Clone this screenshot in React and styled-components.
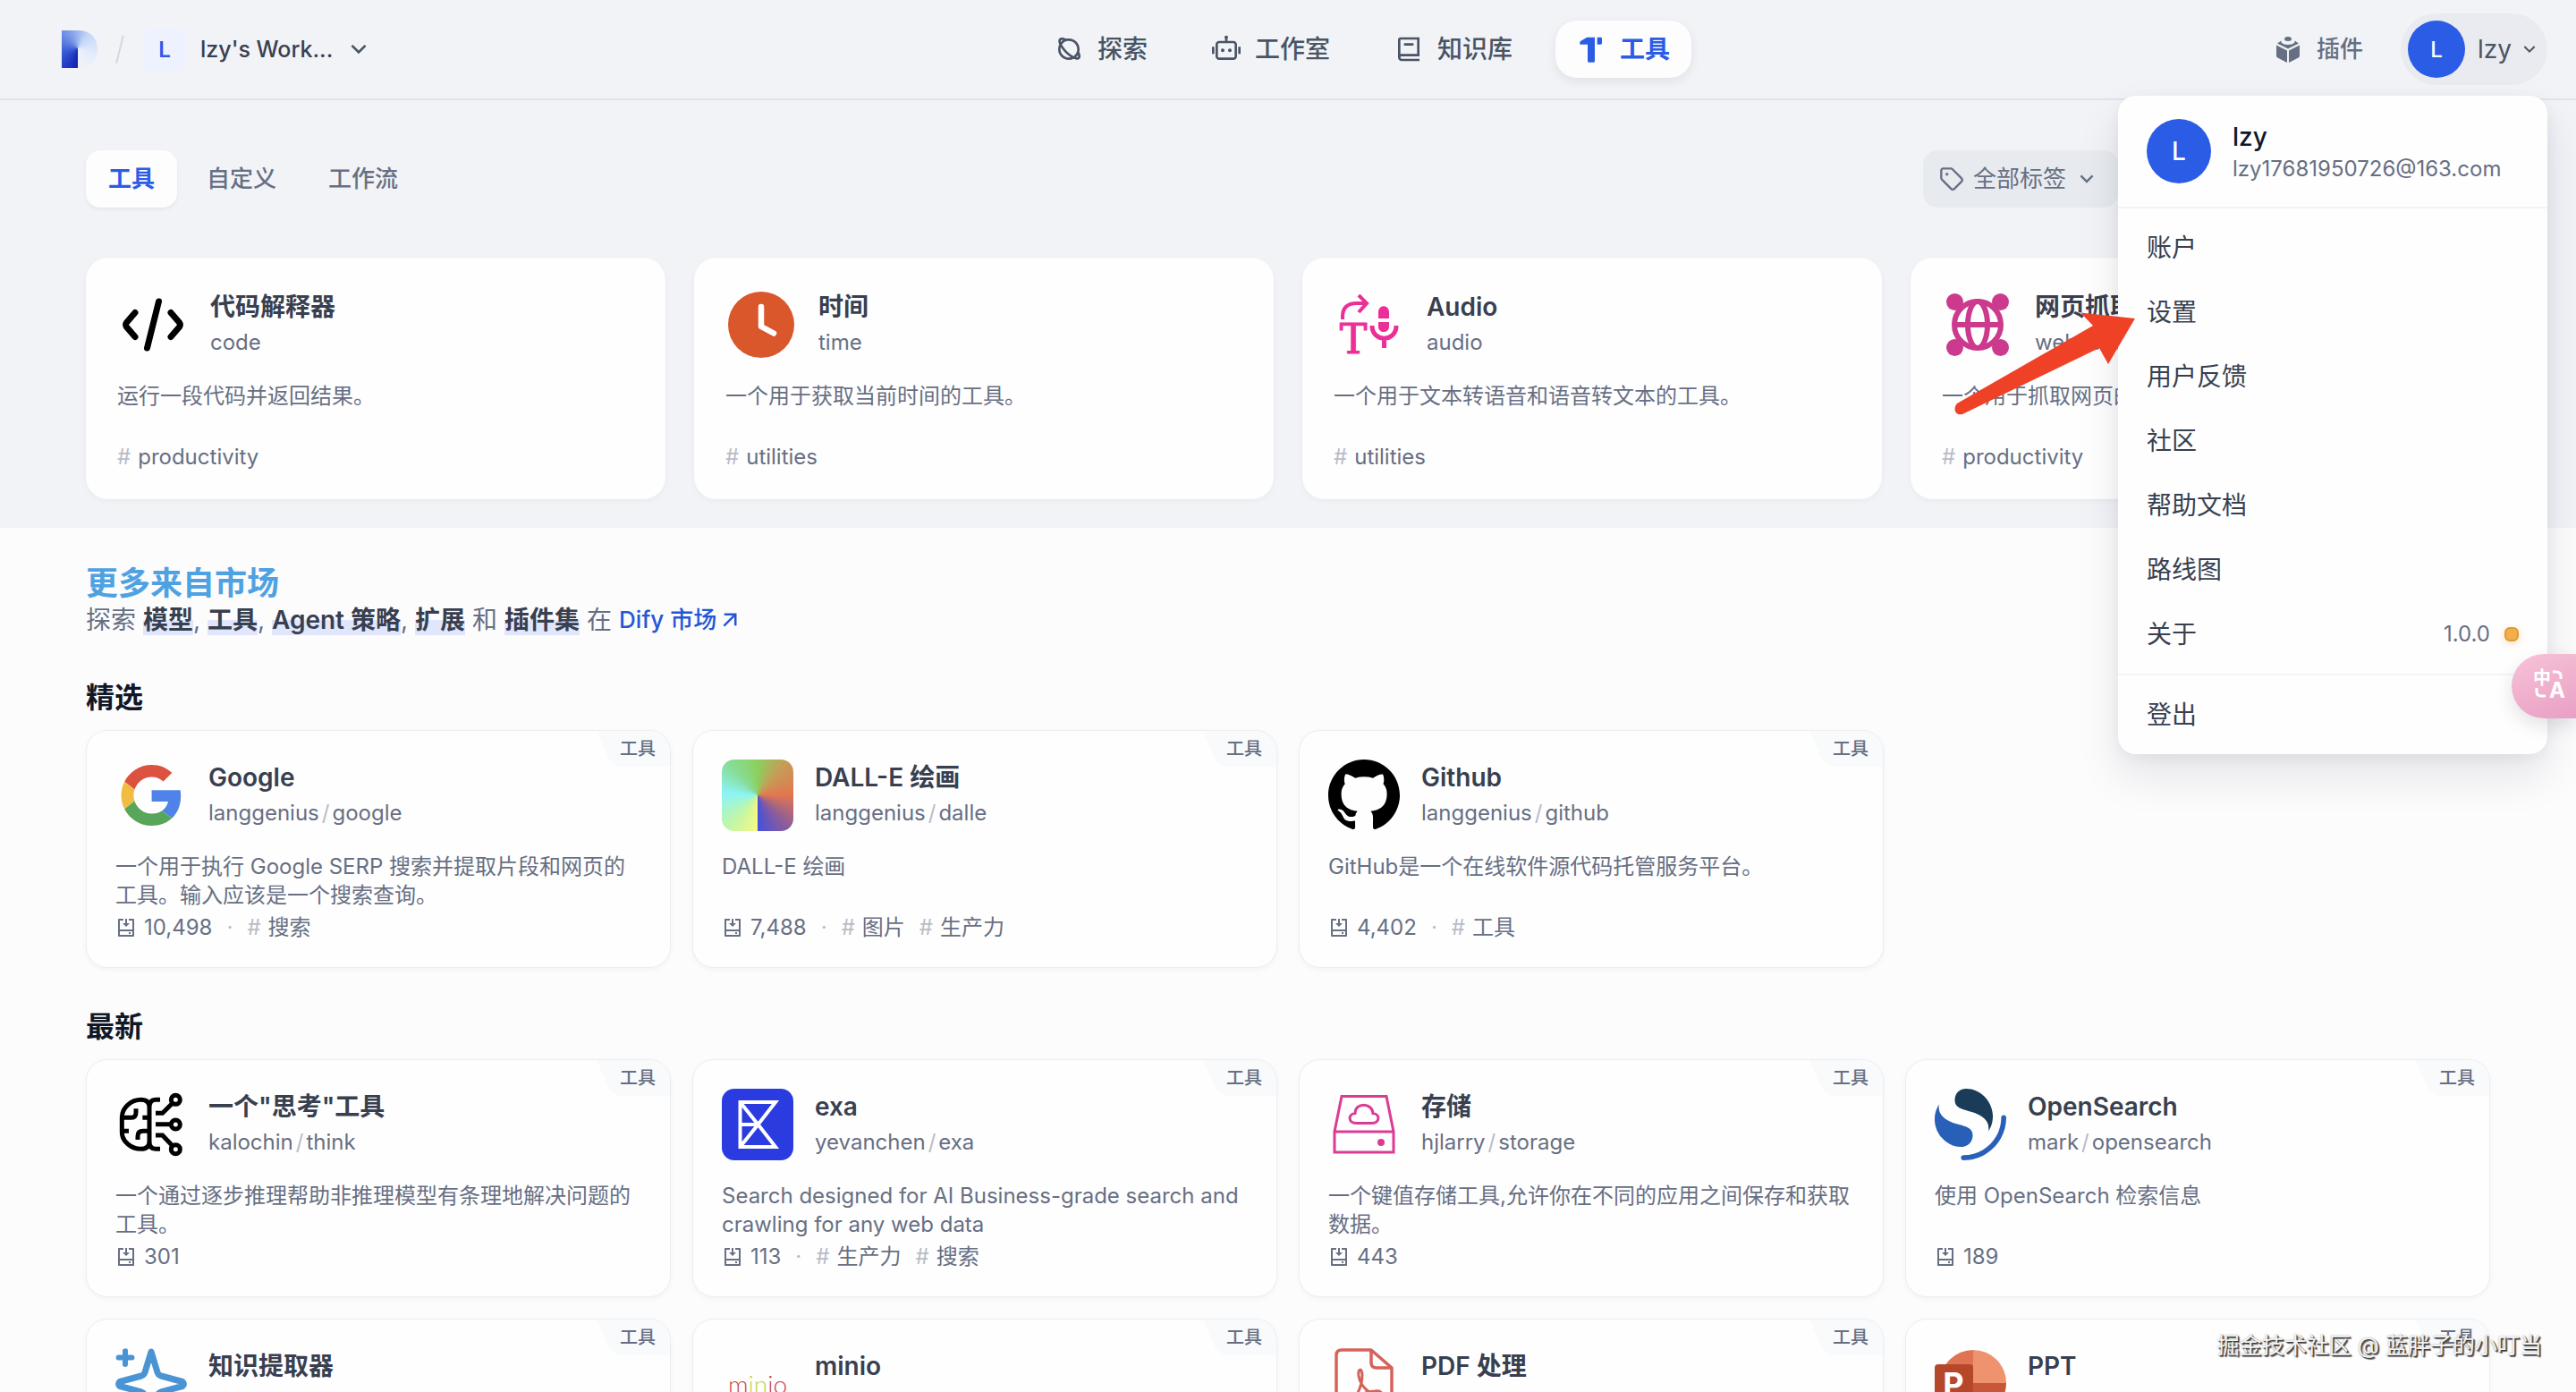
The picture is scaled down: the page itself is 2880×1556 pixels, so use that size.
import React from "react";
import styled, { createGlobalStyle, css } from "styled-components";
import { Tag as TagIcon } from "lucide-react";
import {
  RiPlanetLine,
  RiRobot2Line,
  RiBook2Line,
  RiHammerFill,
  RiArrowDownSLine,
  RiInstallLine,
  RiArrowRightUpLine,
  RiGithubFill,
} from "react-icons/ri";

const GlobalStyle = createGlobalStyle`
  *, *::before, *::after { box-sizing: border-box; }
  body {
    margin: 0;
    background: #fcfcfd;
    color: #354052;
    font-family: Inter, "Noto Sans CJK SC", sans-serif;
    -webkit-font-smoothing: antialiased;
  }
  button, select, input { font: inherit; color: inherit; }
  h1, h2, h3, p, ul { margin: 0; padding: 0; }
  ul { list-style: none; }
  a { color: inherit; text-decoration: none; }
`;

const color = {
  body: "#f1f3f7",
  primary: "#101828",
  secondary: "#384050",
  tertiary: "#676f83",
  faint: "#b8bcc6",
  accent: "#2b5ce6",
};

const Page = styled.div`
  position: relative;
  height: 100vh;
  overflow: hidden;
  display: flex;
  flex-direction: column;
`;

/* ---------- header ---------- */

const Header = styled.header`
  flex: none;
  display: flex;
  align-items: center;
  justify-content: space-between;
  height: 112px;
  padding: 0 32px 0 64px;
  background: #f1f3f7;
  border-bottom: 2px solid #e0e3e8;
`;

const HeaderStart = styled.div`
  display: flex;
  align-items: center;
  min-width: 464px;
`;

const HeaderEnd = styled.div`
  display: flex;
  align-items: center;
  gap: 18px;
`;

const Logo = styled.a`
  width: 40px;
  height: 42px;
  margin: 0 24px 0 5px;
  border-radius: 0 20px 20px 0;
  background: conic-gradient(
    from 180deg at 18px 20px,
    #1022b4,
    #3a5fd8 22%,
    #7f9be8 42%,
    #c3d6f8 60%,
    #e3ecfb 80%,
    #f1f3f8
  );
`;

const Slash = styled.span`
  width: 2px;
  height: 32px;
  background: #d5d8df;
  transform: rotate(14deg);
`;

const Workspace = styled.label`
  display: flex;
  align-items: center;
  gap: 16px;
  margin-left: 25px;
`;

const WorkspaceBadge = styled.span`
  display: grid;
  place-items: center;
  width: 48px;
  height: 48px;
  border-radius: 12px;
  background: #eef2ff;
  color: ${color.accent};
  font-size: 24px;
  font-weight: 600;
`;

const SelectWrap = styled.span`
  display: flex;
  align-items: center;
  gap: ${(p) => p.$gap}px;
`;

const BareSelect = styled.select`
  appearance: none;
  border: 0;
  padding: 0;
  background: transparent;
  color: ${(p) => p.$color};
  font-size: ${(p) => p.$size || 26}px;
  font-weight: ${(p) => p.$weight || 400};
  line-height: 40px;
`;

const Nav = styled.nav`
  display: flex;
  gap: 24px;
`;

const NavItem = styled.a`
  display: flex;
  align-items: center;
  gap: 16px;
  height: 64px;
  padding: 0 24px;
  border-radius: 24px;
  color: #495464;
  font-size: 28px;
  font-weight: 500;
  line-height: 40px;
  ${(p) =>
    p.$active &&
    css`
      background: #fdfdfe;
      color: ${color.accent};
      font-weight: 700;
      box-shadow: 0 4px 12px rgba(16, 24, 40, 0.08);
    `}
`;

const PluginLink = styled.a`
  display: flex;
  align-items: center;
  gap: 16px;
  height: 64px;
  padding: 0 24px;
  color: ${color.tertiary};
  font-size: 26px;
  font-weight: 500;
  line-height: 40px;
`;

const Account = styled.div`
  position: relative;
`;

const AccountButton = styled.button`
  display: flex;
  align-items: center;
  gap: 8px;
  height: 80px;
  padding: 8px;
  border: 0;
  border-radius: 40px;
  background: #e9ebf0;
  color: #495464;
  font-size: 28px;
`;

const Avatar = styled.span`
  flex: none;
  display: grid;
  place-items: center;
  width: ${(p) => p.$size}px;
  height: ${(p) => p.$size}px;
  border-radius: 50%;
  background: ${color.accent};
  color: #fff;
  font-size: ${(p) => (p.$size > 64 ? 28 : 24)}px;
  font-weight: 500;
`;

const AccountName = styled.span`
  margin-left: 6px;
`;

/* ---------- account menu ---------- */

const Menu = styled.div`
  position: absolute;
  z-index: 2;
  top: 92px;
  right: 0;
  width: 480px;
  border-radius: 20px;
  background: #fefefe;
  box-shadow: 0 24px 48px rgba(16, 24, 40, 0.1), 0 4px 16px rgba(16, 24, 40, 0.05);
`;

const MenuProfile = styled.div`
  display: flex;
  align-items: center;
  gap: 24px;
  padding: 26px 32px;
`;

const ProfileName = styled.p`
  color: ${color.primary};
  font-size: 28px;
  font-weight: 500;
  line-height: 40px;
`;

const ProfileMail = styled.p`
  color: ${color.tertiary};
  font-size: 24px;
  line-height: 32px;
`;

const MenuGroup = styled.ul`
  padding: 8px 0;
  border-top: 2px solid #f2f3f5;
`;

const MenuItem = styled.a`
  display: flex;
  align-items: center;
  height: 72px;
  padding: 0 32px;
  color: ${color.secondary};
  font-size: 28px;
  line-height: 40px;
`;

const Version = styled.span`
  display: flex;
  align-items: center;
  gap: 16px;
  margin-left: auto;
  color: ${color.tertiary};
  font-size: 24px;

  &::after {
    content: "";
    width: 16px;
    height: 16px;
    border: 2px solid #e09a35;
    border-radius: 6px;
    background: #f3ad4a;
    box-shadow: 0 2px 8px rgba(243, 173, 74, 0.4);
  }
`;

/* ---------- installed tools ---------- */

const Installed = styled.section`
  padding: 56px 96px 32px;
  background: ${color.body};
`;

const Toolbar = styled.div`
  display: flex;
  align-items: center;
  justify-content: space-between;
  margin-bottom: 56px;
`;

const Group = styled.div`
  display: flex;
  gap: ${(p) => p.$gap}px;
`;

const Tab = styled.button`
  height: 64px;
  padding: 0 25px;
  border: 0;
  border-radius: 16px;
  background: transparent;
  color: ${color.tertiary};
  font-size: 26px;
  font-weight: 500;
  line-height: 40px;
  ${(p) =>
    p.$active &&
    css`
      background: #fdfdfe;
      color: ${color.accent};
      font-weight: 700;
      box-shadow: 0 2px 4px rgba(16, 24, 40, 0.06);
    `}
`;

const TagFilter = styled.label`
  display: flex;
  align-items: center;
  gap: 10px;
  width: 218px;
  height: 64px;
  padding: 0 18px;
  border-radius: 16px;
  background: #e7ebef;
  color: ${color.tertiary};
`;

const Search = styled.input`
  width: 400px;
  height: 64px;
  padding: 0 16px;
  border: 0;
  border-radius: 16px;
  background: #e7ebef;
  font-size: 26px;
`;

const CardGrid = styled.div`
  display: grid;
  grid-template-columns: repeat(4, minmax(0, 1fr));
  gap: ${(p) => p.$gap}px;
`;

const Card = styled.article`
  position: relative;
  overflow: hidden;
  border: 1px solid ${(p) => (p.$roomy ? "#fbfcfd" : "#eceef2")};
  border-radius: 24px;
  padding: ${(p) => (p.$roomy ? "34px 34px 26px" : "32px 32px 24px")};
  background: #fefefe;
  box-shadow: 0 2px 6px rgba(16, 24, 40, 0.04);
`;

const CardHead = styled.div`
  display: flex;
  align-items: center;
  gap: 24px;
  margin-bottom: 24px;
`;

const IconBox = styled.span`
  flex: none;
  display: grid;
  place-items: center;
  width: 80px;
  height: 80px;
  border-radius: 14px;
  overflow: hidden;
  background: ${(p) => p.$bg || "transparent"};
`;

const CardTitle = styled.h3`
  color: ${color.secondary};
  font-size: 28px;
  font-weight: 600;
  line-height: 40px;
`;

const CardSub = styled.p`
  display: flex;
  gap: 3px;
  color: ${color.tertiary};
  font-size: 24px;
  line-height: 40px;
`;

const Faint = styled.span`
  color: ${color.faint};
`;

const CardText = styled.p`
  min-height: 64px;
  color: ${color.tertiary};
  font-size: 24px;
  line-height: 32px;
`;

const CardMeta = styled.div`
  display: flex;
  align-items: center;
  gap: 16px;
  height: 40px;
  color: ${color.tertiary};
  font-size: 24px;
  line-height: 40px;
`;

const MetaPart = styled.span`
  display: flex;
  align-items: center;
  gap: 8px;
`;

const Corner = styled.span`
  position: absolute;
  top: 0;
  right: 0;
  height: 40px;
  padding: 0 16px 0 26px;
  background: #f8fafb;
  clip-path: polygon(0 0, 100% 0, 100% 100%, 24px 100%, 14px 80%);
  color: ${color.tertiary};
  font-size: 20px;
  font-weight: 500;
  line-height: 40px;
`;

/* ---------- marketplace ---------- */

const Market = styled.main`
  padding: 38px 96px 0;
`;

const MarketTitle = styled.h1`
  color: #4fa2e2;
  font-size: 36px;
  font-weight: 600;
  line-height: 48px;
`;

const MarketLead = styled.p`
  display: flex;
  align-items: center;
  gap: 8px;
  color: ${color.tertiary};
  font-size: 28px;
  line-height: 34px;
`;

const Mark = styled.strong`
  color: ${color.secondary};
  font-weight: 600;
  background: linear-gradient(to bottom, transparent 50%, #e0e6fb 50%);
`;

const MarketLink = styled.a`
  display: flex;
  align-items: center;
  color: #2457d6;
  font-size: 26px;
  font-weight: 500;
`;

const SectionTitle = styled.h2`
  margin: ${(p) => (p.$first ? 46 : 42)}px 0 12px;
  color: ${color.primary};
  font-size: 32px;
  font-weight: 700;
  line-height: 48px;
`;

/* ---------- overlays ---------- */

const Translate = styled.button`
  position: absolute;
  z-index: 3;
  top: 731px;
  right: 0;
  width: 72px;
  height: 72px;
  padding: 0 0 0 12px;
  border: 0;
  border-radius: 36px 0 0 36px;
  background: linear-gradient(160deg, #f6c3d8, #ea9fc4);
  box-shadow: 0 8px 20px rgba(16, 24, 40, 0.12);
`;

const Pointer = styled.svg`
  position: absolute;
  z-index: 3;
  top: 346px;
  right: 488px;
  pointer-events: none;
`;

const Credit = styled.p`
  position: absolute;
  z-index: 3;
  right: 38px;
  bottom: 36px;
  color: #f4f4f4;
  font-size: 25px;
  line-height: 32px;
  text-shadow: 1px 1px 1px #333, 2px 2px 1px #666, 0 0 2px #aaa;
`;

/* ---------- tool icons, drawn on an 80 unit box ---------- */

const Art = ({ children, box = "0 0 80 80", ...rest }) => (
  <svg width="80" height="80" viewBox={box} fill="none" aria-hidden="true" {...rest}>
    {children}
  </svg>
);

const CodeArt = () => (
  <Art stroke="#000" strokeWidth="7" strokeLinecap="round" strokeLinejoin="round">
    <path d="M20 26.500L10.500 37.500Q8.800 40 10.500 42.500L20 53.500M60 26.500L69.500 37.500Q71.200 40 69.500 42.500L60 53.500M46.500 14L33.500 66" />
  </Art>
);

const ClockArt = () => (
  <Art>
    <circle cx="40" cy="40" r="37" fill="#d9572a" />
    <path d="M40 20V42L54 49.500" stroke="#fff" strokeWidth="6.500" strokeLinecap="round" strokeLinejoin="round" />
  </Art>
);

const AudioArt = () => (
  <Art stroke="#ec2f98" strokeWidth="4">
    <path d="M10 34V31C10 20 16 16 26 16H36M28 7L37 16L28 26" />
    <text
      x="22"
      y="72"
      textAnchor="middle"
      fontFamily="DejaVu Serif, serif"
      fontSize="46"
      fill="#ec2f98"
      stroke="#ec2f98"
      strokeWidth="1"
    >
      T
    </text>
    <path d="M50 33V26C50 17 62 17 62 26V33ZM50 37H62V42C62 50 50 50 50 42Z" fill="#ec2f98" stroke="none" />
    <path d="M43 41C43 60 70 60 70 41M56.500 54V66" strokeWidth="5" />
  </Art>
);

const GlobeArt = () => (
  <Art stroke="#cc3a8e" strokeWidth="6">
    <path d="M16 16L24 24M64 16L56 24M16 64L24 56M64 64L56 56" />
    <g fill="#cc3a8e" stroke="none">
      <circle cx="14.500" cy="14.500" r="9.500" />
      <circle cx="65.500" cy="14.500" r="9.500" />
      <circle cx="14.500" cy="65.500" r="9.500" />
      <circle cx="65.500" cy="65.500" r="9.500" />
    </g>
    <circle cx="40" cy="40" r="26" fill="#fff" />
    <ellipse cx="40" cy="40" rx="11" ry="26" />
    <path d="M14 40H66" />
  </Art>
);

const GoogleArt = () => (
  <Art box="-4.600 -4.200 56.400 56.400">
    <path fill="#dc5140" d="M24 9.500c3.540 0 6.710 1.220 9.210 3.600l6.850-6.850C35.900 2.380 30.470 0 24 0 14.620 0 6.510 5.380 2.560 13.220l7.980 6.190C12.430 13.720 17.740 9.500 24 9.500z" />
    <path fill="#4f83ea" d="M46.980 24.550c0-1.570-.15-3.090-.38-4.550H24v9.020h12.940c-.58 2.960-2.260 5.480-4.780 7.180l7.730 6c4.510-4.180 7.090-10.360 7.090-17.650z" />
    <path fill="#f0bd42" d="M10.530 28.590c-.48-1.450-.76-2.990-.76-4.590s.27-3.140.76-4.590l-7.980-6.190C.92 16.460 0 20.120 0 24c0 3.880.92 7.540 2.560 10.780l7.970-6.190z" />
    <path fill="#57a65b" d="M24 48c6.480 0 11.930-2.130 15.890-5.810l-7.730-6c-2.150 1.450-4.920 2.300-8.160 2.300-6.260 0-11.570-4.220-13.470-9.910l-7.980 6.190C6.510 42.620 14.620 48 24 48z" />
  </Art>
);

const GithubArt = () => <RiGithubFill size={80} viewBox="2 2 20 20" color="#000" />;

const BrainArt = () => (
  <Art box="27 36 240 240" stroke="#000" strokeWidth="15">
    <path d="M141 98C141 79 128 73 112 73C82 73 49 98 49 132V182C49 214 82 238 112 238C128 238 141 232 141 213ZM141 98C141 79 150 73 162 73H177M141 213C141 232 150 238 162 238H177" />
    <path d="M49 133H78C91 133 96 127 96 116V103M118 133H141M49 178H72M141 178H120C107 178 102 184 102 195V207" />
    <path d="M162 118H185L219 84M162 155H212M162 192H185L219 228" />
    <circle cx="229" cy="73" r="15" />
    <circle cx="229" cy="156" r="15" />
    <circle cx="229" cy="239" r="15" />
  </Art>
);

const ExaArt = () => (
  <Art stroke="#fff" strokeWidth="4">
    <path d="M20.500 15H60L40.500 40L60 65H20.500ZM20.500 15L40.500 40L20.500 65M20.500 40H40.500" />
  </Art>
);

const StorageArt = () => (
  <Art stroke="#dc3b94" strokeWidth="3">
    <path d="M15 8.500H65L73 48V71H7V48ZM7 48H73" />
    <path d="M31 38.500C22 38.500 22 28 30 27.500C30 15 49 15 50 27.500C58 28 58 38.500 49 38.500Z" />
    <circle cx="59" cy="60" r="4" fill="#dc3b94" stroke="none" />
  </Art>
);

const OpenSearchArt = () => (
  <Art box="0 0 64 64">
    <path fill="#2860b8" d="M61.737 23.500C60.488 23.500 59.475 24.513 59.475 25.763C59.475 44.381 44.381 59.475 25.763 59.475C24.513 59.475 23.500 60.488 23.500 61.737C23.500 62.987 24.513 64 25.763 64C46.881 64 64 46.881 64 25.763C64 24.513 62.987 23.500 61.737 23.500Z" />
    <path fill="#1a3c58" d="M48.081 38C50.257 34.451 52.362 29.718 51.948 23.092C51.090 9.367 38.659 -1.045 26.921 0.084C22.325 0.525 17.607 4.271 18.026 10.981C18.208 13.896 19.635 15.617 21.954 16.940C24.162 18.199 26.998 18.997 30.213 19.901C34.096 20.993 38.601 22.220 42.063 24.772C46.213 27.830 49.049 31.374 48.081 38Z" />
    <path fill="#2860b8" d="M3.919 14C1.743 17.550 -0.362 22.282 0.052 28.908C0.910 42.633 13.341 53.045 25.079 51.916C29.675 51.475 34.393 47.729 33.974 41.020C33.792 38.104 32.365 36.383 30.046 35.060C27.838 33.801 25.002 33.003 21.787 32.099C17.904 31.007 13.399 29.780 9.937 27.228C5.787 24.171 2.951 20.626 3.919 14Z" />
  </Art>
);

const SparkArt = () => (
  <Art stroke="#4a94d4" strokeWidth="7" strokeLinecap="round" strokeLinejoin="round">
    <path d="M40 4L33 27Q32 30 29 31L5 37.500Q2 40 5 42.500L29 49Q32 50 33 53L40 76L47 53Q48 50 51 49L75 42.500Q78 40 75 37.500L51 31Q48 30 47 27Z" />
    <path d="M11 3V18M3.500 10.500H18.500" strokeWidth="6" />
  </Art>
);

const PdfArt = () => (
  <Art stroke="#d4635a" strokeWidth="3.500" strokeLinejoin="round">
    <path d="M48 2H15Q9 2 9 8V72Q9 78 15 78H65Q71 78 71 72V22ZM48 2V16Q48 22 54 22H71" />
    <path d="M22 64C30 58 38 44 38 30C38 22 33 22 34 31C36 42 45 52 57 52C62 52 60 47 52 48C40 49 24 56 20 62C19 66 21 66 22 64Z" strokeWidth="3" />
  </Art>
);

const PptArt = () => (
  <Art>
    <path d="M43 39V2A37 37 0 0 0 6 39Z" fill="#e07452" />
    <path d="M43 2A37 37 0 0 1 80 39H43Z" fill="#ee926f" />
    <path d="M6 39H80A37 37 0 0 1 6 39Z" fill="#c85638" />
    <rect x="0" y="18" width="43" height="43" rx="4" fill="#b7472a" />
    <text x="21" y="53" textAnchor="middle" fontFamily="Inter, sans-serif" fontSize="36" fontWeight="700" fill="#fff">
      P
    </text>
  </Art>
);

const Wordmark = styled.span`
  color: #c9474a;
  font-family: Lato, sans-serif;
  font-size: 28px;
  font-weight: 300;
  line-height: 32px;
`;

const Lime = styled.span`
  color: #c3d24c;
`;

const MinioArt = () => (
  <Wordmark>
    m<Lime>in</Lime>io
  </Wordmark>
);

const PluginIcon = () => (
  <svg width="32" height="32" viewBox="0 0 32 32" fill="currentColor" aria-hidden="true">
    <path d="M3 11.500L15 17.500V31L4.300 25.500Q3 24.700 3 23.500ZM29 11.500L17 17.500V31L27.700 25.500Q29 24.700 29 23.500Z" />
    <path d="M4 9.500L8.500 6.500V7.500C8.500 12 23.500 12 23.500 7.500V6.500L28 9.500L16 15.500Z" />
    <ellipse cx="16" cy="4.500" rx="4" ry="2.500" />
  </svg>
);

const TranslateIcon = () => (
  <svg width="36" height="36" viewBox="0 0 36 36" fill="none" stroke="#fff" strokeWidth="3" aria-hidden="true">
    <text x="10" y="18" textAnchor="middle" fontFamily="Noto Sans CJK SC, sans-serif" fontSize="20" fontWeight="700" fill="#fff" stroke="none">
      中
    </text>
    <text x="27" y="33" textAnchor="middle" fontFamily="Inter, sans-serif" fontSize="24" fontWeight="700" fill="#fff" stroke="none">
      A
    </text>
    <path d="M22 4H26Q31 4 31 9V12M4 22V26Q4 31 9 31H14" />
  </svg>
);

/* ---------- data ---------- */

const installed = [
  { title: "代码解释器", name: "code", text: "运行一段代码并返回结果。", tag: "productivity", Icon: CodeArt },
  { title: "时间", name: "time", text: "一个用于获取当前时间的工具。", tag: "utilities", Icon: ClockArt },
  { title: "Audio", name: "audio", text: "一个用于文本转语音和语音转文本的工具。", tag: "utilities", Icon: AudioArt },
  { title: "网页抓取", name: "webscraper", text: "一个用于抓取网页的工具。", tag: "productivity", Icon: GlobeArt },
];

const dalleFill =
  "conic-gradient(#8bd05e, #c89a58 12%, #e2764e 25%, #8a5c9c 38%, #4450dc 50%, #f6f884 50%, #c0f6a8 62%, #8cf4f6 76%, #88dc98 88%, #8bd05e)";

const featured = [
  { title: "Google", org: "langgenius", name: "google", text: "一个用于执行 Google SERP 搜索并提取片段和网页的工具。输入应该是一个搜索查询。", installs: "10,498", tags: ["搜索"], Icon: GoogleArt },
  { title: "DALL-E 绘画", org: "langgenius", name: "dalle", text: "DALL-E 绘画", installs: "7,488", tags: ["图片", "生产力"], bg: dalleFill },
  { title: "Github", org: "langgenius", name: "github", text: "GitHub是一个在线软件源代码托管服务平台。", installs: "4,402", tags: ["工具"], Icon: GithubArt },
];

const latest = [
  { title: '一个"思考"工具', org: "kalochin", name: "think", text: "一个通过逐步推理帮助非推理模型有条理地解决问题的工具。", installs: "301", tags: [], Icon: BrainArt },
  { title: "exa", org: "yevanchen", name: "exa", text: "Search designed for AI Business-grade search and crawling for any web data", installs: "113", tags: ["生产力", "搜索"], Icon: ExaArt, bg: "#2a3ce0" },
  { title: "存储", org: "hjlarry", name: "storage", text: "一个键值存储工具,允许你在不同的应用之间保存和获取数据。", installs: "443", tags: [], Icon: StorageArt },
  { title: "OpenSearch", org: "mark", name: "opensearch", text: "使用 OpenSearch 检索信息", installs: "189", tags: [], Icon: OpenSearchArt },
  { title: "知识提取器", Icon: SparkArt },
  { title: "minio", Icon: MinioArt },
  { title: "PDF 处理", Icon: PdfArt },
  { title: "PPT", Icon: PptArt },
];

const Tag = ({ children }) => (
  <MetaPart>
    <Faint>#</Faint>
    {children}
  </MetaPart>
);

const MarketCard = ({ title, org, name, text, installs, tags, Icon, bg }) => (
  <Card>
    <Corner>工具</Corner>
    <CardHead>
      <IconBox $bg={bg}>{Icon && <Icon />}</IconBox>
      <div>
        <CardTitle>{title}</CardTitle>
        <CardSub>
          {org ? (
            <>
              {org}
              <Faint>/</Faint>
              {name}
            </>
          ) : (
            "\u00a0"
          )}
        </CardSub>
      </div>
    </CardHead>
    <CardText>{text}</CardText>
    {installs && (
      <CardMeta>
        <MetaPart>
          <RiInstallLine size={24} />
          {installs}
        </MetaPart>
        {tags.length > 0 && <Faint>·</Faint>}
        {tags.map((t) => (
          <Tag key={t}>{t}</Tag>
        ))}
      </CardMeta>
    )}
  </Card>
);

const menuItems = ["账户", "设置", "用户反馈", "社区", "帮助文档", "路线图"];

export default function App() {
  return (
    <Page>
      <GlobalStyle />
      <Header>
        <HeaderStart>
          <Logo href="#" aria-label="Dify" />
          <Slash />
          <Workspace>
            <WorkspaceBadge>L</WorkspaceBadge>
            <SelectWrap $gap={12}>
              <BareSelect $color={color.secondary} $weight={500} $size={25}>
                <option>lzy's Work...</option>
              </BareSelect>
              <RiArrowDownSLine size={32} color="#495464" />
            </SelectWrap>
          </Workspace>
        </HeaderStart>
        <Nav>
          <NavItem href="#">
            <RiPlanetLine size={32} />
            探索
          </NavItem>
          <NavItem href="#">
            <RiRobot2Line size={32} />
            工作室
          </NavItem>
          <NavItem href="#">
            <RiBook2Line size={32} />
            知识库
          </NavItem>
          <NavItem href="#" $active>
            <RiHammerFill size={32} />
            工具
          </NavItem>
        </Nav>
        <HeaderEnd>
          <PluginLink href="#">
            <PluginIcon />
            插件
          </PluginLink>
          <Account>
            <AccountButton type="button" aria-haspopup="menu" aria-expanded="true">
              <Avatar $size={64}>L</Avatar>
              <AccountName>lzy</AccountName>
              <RiArrowDownSLine size={24} />
            </AccountButton>
            <Menu>
              <MenuProfile>
                <Avatar $size={72}>L</Avatar>
                <div>
                  <ProfileName>lzy</ProfileName>
                  <ProfileMail>lzy17681950726@163.com</ProfileMail>
                </div>
              </MenuProfile>
              <MenuGroup>
                {menuItems.map((label) => (
                  <li key={label}>
                    <MenuItem href="#">{label}</MenuItem>
                  </li>
                ))}
                <li>
                  <MenuItem href="#">
                    关于
                    <Version>1.0.0</Version>
                  </MenuItem>
                </li>
              </MenuGroup>
              <MenuGroup>
                <li>
                  <MenuItem href="#">登出</MenuItem>
                </li>
              </MenuGroup>
            </Menu>
          </Account>
        </HeaderEnd>
      </Header>

      <Installed>
        <Toolbar>
          <Group $gap={8}>
            <Tab type="button" $active>
              工具
            </Tab>
            <Tab type="button">自定义</Tab>
            <Tab type="button">工作流</Tab>
          </Group>
          <Group $gap={16}>
            <TagFilter>
              <TagIcon size={28} />
              <SelectWrap $gap={8}>
                <BareSelect $color={color.tertiary}>
                  <option>全部标签</option>
                </BareSelect>
                <RiArrowDownSLine size={28} />
              </SelectWrap>
            </TagFilter>
            <Search type="search" aria-label="搜索" />
          </Group>
        </Toolbar>
        <CardGrid $gap={32}>
          {installed.map(({ title, name, text, tag, Icon }) => (
            <Card key={name} $roomy>
              <CardHead>
                <IconBox>
                  <Icon />
                </IconBox>
                <div>
                  <CardTitle>{title}</CardTitle>
                  <CardSub>{name}</CardSub>
                </div>
              </CardHead>
              <CardText>{text}</CardText>
              <CardMeta>
                <Tag>{tag}</Tag>
              </CardMeta>
            </Card>
          ))}
        </CardGrid>
      </Installed>

      <Market>
        <MarketTitle>更多来自市场</MarketTitle>
        <MarketLead>
          探索
          <span>
            <Mark>模型</Mark>, <Mark>工具</Mark>, <Mark>Agent 策略</Mark>, <Mark>扩展</Mark>
          </span>
          和<Mark>插件集</Mark>在
          <MarketLink href="#">
            Dify 市场
            <RiArrowRightUpLine size={30} />
          </MarketLink>
        </MarketLead>

        <SectionTitle $first>精选</SectionTitle>
        <CardGrid $gap={24}>
          {featured.map((tool) => (
            <MarketCard key={tool.title} {...tool} />
          ))}
        </CardGrid>

        <SectionTitle>最新</SectionTitle>
        <CardGrid $gap={24}>
          {latest.map((tool) => (
            <MarketCard key={tool.title} {...tool} />
          ))}
        </CardGrid>
      </Market>

      <Pointer width="208" height="124" viewBox="0 0 208 124" aria-hidden="true">
        <path d="M203 10L142 3.500L156 18L4 105C-1 111 2 119 10 117L163 43L173 61Z" fill="#ee4126" />
      </Pointer>
      <Translate type="button" aria-label="翻译">
        <TranslateIcon />
      </Translate>
      <Credit>掘金技术社区 @ 蓝胖子的小叮当</Credit>
    </Page>
  );
}
